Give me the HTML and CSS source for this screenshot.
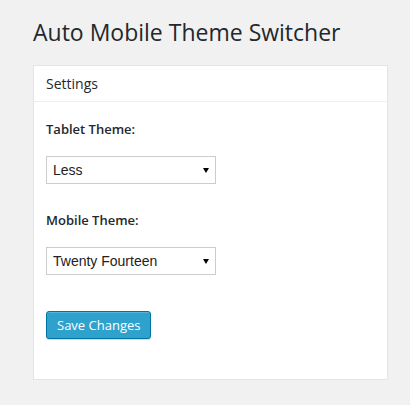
FILE: index.html
```html
<!DOCTYPE html>
<html>
<head>
<meta charset="utf-8">
<link rel="stylesheet" href="styles.css">
</head>
<body>
<div class="wrap">
  <h2 class="title">Auto Mobile Theme Switcher</h2>
  <div class="postbox">
    <h3 class="hndle">Settings</h3>
    <div class="inside">
      <div class="field">
        <label class="lbl">Tablet Theme:</label>
        <div class="select"><span>Less</span></div>
      </div>
      <div class="field">
        <label class="lbl">Mobile Theme:</label>
        <div class="select"><span>Twenty Fourteen</span></div>
      </div>
      <button class="button-primary">Save Changes</button>
    </div>
  </div>
</div>
</body>
</html>
```

FILE: styles.css
```css
html, body {
  margin: 0;
  padding: 0;
  background: #f1f1f1;
  font-family: "Open Sans", sans-serif;
  color: #23282d;
}
.wrap {
  padding: 16px 0 0 33px;
}
.title {
  margin: 0;
  font-size: 23px;
  font-weight: 400;
  line-height: 32px;
  color: #23282d;
}
.postbox {
  margin-top: 17px;
  width: 353px;
  background: #fff;
  border: 1px solid #e5e5e5;
  box-shadow: 0 1px 1px rgba(0,0,0,0.04);
}
.hndle {
  margin: 0;
  height: 35px;
  padding: 0 12px;
  font-size: 14px;
  font-weight: 400;
  line-height: 35px;
  border-bottom: 1px solid #eee;
}
.inside {
  padding: 18px 12px 40px;
  display: flex;
  flex-direction: column;
  align-items: flex-start;
}
.field {
  display: flex;
  flex-direction: column;
  align-items: flex-start;
  margin-bottom: 27px;
}
.field + .field {
  margin-bottom: 36px;
}
.lbl {
  font-size: 13px;
  font-weight: 600;
  line-height: 18px;
  margin-bottom: 18px;
}
.select {
  position: relative;
  box-sizing: border-box;
  width: 170px;
  height: 28px;
  border: 1px solid #ccc;
  background: #fff;
  padding: 0 6px;
  font-family: "Liberation Sans", Arial, sans-serif;
  font-size: 14px;
  line-height: 26px;
  color: #222;
}
.select::after {
  content: "";
  position: absolute;
  right: 6px;
  top: 11px;
  border-left: 3px solid transparent;
  border-right: 3px solid transparent;
  border-top: 5px solid #000;
}
.button-primary {
  box-sizing: border-box;
  height: 28px;
  padding: 0 10px;
  background: #2ea2cc;
  border: 1px solid #0074a2;
  border-radius: 3px;
  box-shadow: inset 0 1px 0 rgba(120,200,230,0.5), 0 1px 0 rgba(0,0,0,0.15);
  color: #fff;
  font-family: "Open Sans", sans-serif;
  font-size: 13px;
  line-height: 26px;
  cursor: pointer;
}
```
